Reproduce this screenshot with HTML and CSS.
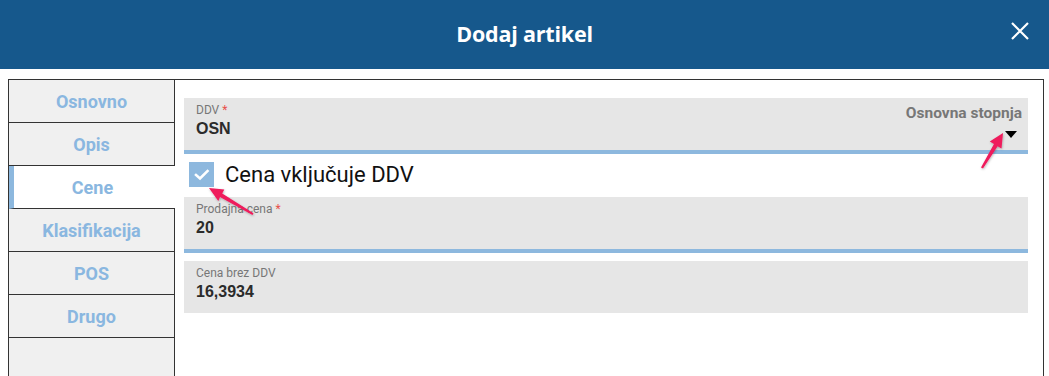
FILE: index.html
```html
<!DOCTYPE html>
<html lang="sl">
<head>
<meta charset="utf-8">
<title>Dodaj artikel</title>
<link rel="stylesheet" href="styles.css">
</head>
<body>
<header class="header">
  <h1 class="title">Dodaj artikel</h1>
  <button class="close" aria-label="Zapri">
    <svg width="18" height="18" viewBox="0 0 18 18"><path d="M1 1 L17 17 M17 1 L1 17" stroke="#fff" stroke-width="2.2" fill="none"/></svg>
  </button>
</header>
<main class="panel">
  <nav class="sidebar">
    <div class="tab">Osnovno</div>
    <div class="tab">Opis</div>
    <div class="tab active">Cene</div>
    <div class="tab">Klasifikacija</div>
    <div class="tab">POS</div>
    <div class="tab">Drugo</div>
  </nav>
  <section class="content">
    <div class="field underline">
      <div class="field-main">
        <div class="label">DDV <span class="req">*</span></div>
        <div class="value">OSN</div>
      </div>
      <div class="field-side">
        <div class="hint">Osnovna stopnja</div>
        <div class="caret"></div>
      </div>
    </div>
    <div class="check-row">
      <span class="checkbox">
        <svg width="25" height="25" viewBox="0 0 25 25"><path d="M7 13 L11 16.5 L18.5 9" stroke="#fff" stroke-width="2.6" fill="none" stroke-linecap="square"/></svg>
      </span>
      <span class="check-label">Cena vključuje DDV</span>
    </div>
    <div class="field underline gap-top">
      <div class="field-main">
        <div class="label">Prodajna cena <span class="req">*</span></div>
        <div class="value">20</div>
      </div>
    </div>
    <div class="field gap-top2">
      <div class="field-main">
        <div class="label">Cena brez DDV</div>
        <div class="value">16,3934</div>
      </div>
    </div>
  </section>
</main>
<svg class="annot" width="1049" height="376" viewBox="0 0 1049 376">
  <defs>
    <filter id="sh" x="-20%" y="-20%" width="140%" height="140%">
      <feDropShadow dx="0.5" dy="1" stdDeviation="1" flood-color="#000" flood-opacity="0.3"/>
    </filter>
  </defs>
  <polygon filter="url(#sh)" fill="#ef1a5c" points="1003,133 1001.5,148.5 997.6,146.2 983,168.6 981,167.4 994,144 989.8,141.6"/>
  <polygon filter="url(#sh)" fill="#ef1a5c" points="209,188 224.3,189.6 222.2,193.4 253.5,213.2 252.5,215 220,197 218.3,201"/>
</svg>
</body>
</html>
```
FILE: styles.css
```css
html, body {
  margin: 0;
  padding: 0;
  overflow: hidden;
  background: #fff;
}
body {
  width: 1049px;
  height: 376px;
  position: relative;
  font-family: "Liberation Sans", Arial, sans-serif;
}
.header {
  height: 69px;
  background: #16588c;
  display: flex;
  align-items: center;
  justify-content: center;
  position: relative;
}
.title {
  margin: 0;
  color: #fff;
  font-family: "Open Sans", sans-serif;
  font-weight: 700;
  font-size: 21.5px;
  line-height: 30px;
  margin-top: -1px;
  letter-spacing: -0.2px;
}
.close {
  position: absolute;
  left: 1011px;
  top: 22px;
  width: 18px;
  height: 18px;
  padding: 0;
  border: 0;
  background: none;
  display: block;
}
.close svg { display: block; }
.panel {
  margin: 10px 0 0 8px;
  width: 1036px;
  height: 310px;
  box-sizing: border-box;
  border: 1px solid #333;
  display: flex;
}
.sidebar {
  width: 166px;
  box-sizing: border-box;
  flex: none;
  background: #f0f0f0;
  border-right: 1px solid #333;
  display: flex;
  flex-direction: column;
}
.tab {
  height: 42px;
  border-bottom: 1px solid #333;
  display: flex;
  align-items: center;
  justify-content: center;
  font-family: Roboto, sans-serif;
  font-weight: 700;
  font-size: 18px;
  color: #8ab7e0;
  position: relative;
}
.tab.active {
  background: #fff;
  margin-right: -1px;
  border-left: 5px solid #8db8de;
  padding-right: 4px;
}
.content {
  flex: 1;
  padding: 18px 15px 0 9px;
  display: flex;
  flex-direction: column;
}
.field {
  height: 52px;
  background: #e6e6e6;
  display: flex;
  justify-content: space-between;
  padding: 0 6px 0 12px;
  flex: none;
}
.field.underline {
  border-bottom: 4px solid #8db8de;
}
.field-main {
  padding-top: 5px;
}
.label {
  font-family: Roboto, sans-serif;
  font-size: 12px;
  line-height: 14px;
  color: #777;
}
.req { color: #e8504a; }
.value {
  margin-top: 2px;
  font-size: 16px;
  line-height: 20px;
  font-weight: 700;
  color: #2b2b2b;
}
.field-side {
  padding-top: 6px;
  display: flex;
  flex-direction: column;
  align-items: flex-end;
}
.hint {
  font-family: Roboto, sans-serif;
  font-weight: 700;
  font-size: 15.5px;
  line-height: 18px;
  color: #777;
}
.caret {
  margin-top: 9px;
  margin-right: 5px;
  width: 0;
  height: 0;
  border-left: 6px solid transparent;
  border-right: 6px solid transparent;
  border-top: 7px solid #000;
}
.check-row {
  margin-top: 8px;
  height: 25px;
  display: flex;
  align-items: center;
  padding-left: 5px;
}
.checkbox {
  width: 25px;
  height: 25px;
  background: #8db8de;
  display: block;
  flex: none;
}
.checkbox svg { display: block; }
.check-label {
  margin-left: 11px;
  font-family: Roboto, sans-serif;
  font-size: 22px;
  color: #111;
  line-height: 25px;
}
.gap-top { margin-top: 10px; }
.gap-top2 { margin-top: 8px; }
.annot {
  position: absolute;
  left: 0;
  top: 0;
  pointer-events: none;
}
```
